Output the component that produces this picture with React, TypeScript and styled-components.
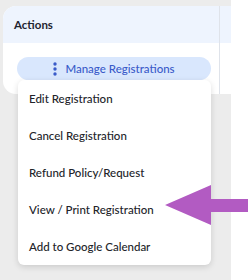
import React from 'react';
import styled, { createGlobalStyle } from 'styled-components';

const GlobalStyle = createGlobalStyle`
  html, body {
    margin: 0;
    padding: 0;
    background: #ffffff;
    font-family: Lato, "Open Sans", Arial, sans-serif;
  }
`;

const Page = styled.div`
  position: relative;
  display: flex;
  width: 248px;
  height: 280px;
  overflow: hidden;
`;

const Canvas = styled.div`
  width: 231px;
  height: 280px;
  background: #ececec;
  padding: 6px 0 0 3px;
  box-sizing: border-box;
`;

const SideStrip = styled.div`
  flex: 1;
  background: #ffffff;
`;

const Card = styled.section`
  display: flex;
  height: 88px;
  background: #ffffff;
  border-radius: 13px 0 0 13px;
  overflow: hidden;
`;

const ActionsColumn = styled.div`
  width: 223px;
  display: flex;
  flex-direction: column;
`;

const NextColumn = styled.div`
  flex: 1;
  border-left: 1px solid #dfe3ea;
  display: flex;
  flex-direction: column;
`;

const HeaderCell = styled.div`
  height: 37px;
  flex-shrink: 0;
  background: #eef4fe;
  display: flex;
  align-items: center;
  padding-left: 11px;
  font-size: 11.5px;
  font-weight: 700;
  color: #1f2430;
`;

const BodyCell = styled.div`
  padding: 14px 0 0 14px;
`;

const ManageButton = styled.button`
  width: 194px;
  height: 23px;
  border: none;
  border-radius: 12px;
  background: #d9e7fd;
  color: #3a5bc9;
  font-family: inherit;
  font-size: 11.5px;
  font-weight: 500;
  display: flex;
  align-items: center;
  justify-content: center;
  gap: 8px;
  padding: 0;
  cursor: pointer;
`;

const Menu = styled.ul`
  position: absolute;
  left: 18px;
  top: 80px;
  width: 193px;
  margin: 0;
  padding: 0;
  list-style: none;
  background: #ffffff;
  border-radius: 6px;
  box-shadow: 0 2px 6px rgba(0, 0, 0, 0.14);
`;

const MenuItem = styled.li`
  height: 37px;
  display: flex;
  align-items: center;
  padding-left: 11px;
  font-size: 11.5px;
  font-weight: 500;
  color: #222429;
  white-space: nowrap;
`;

const Arrow = styled.svg`
  position: absolute;
  left: 165px;
  top: 185px;
`;

const DotsIcon = () => (
  <svg width="4" height="14" viewBox="0 0 4 14">
    <circle cx="2" cy="2" r="1.7" fill="currentColor" />
    <circle cx="2" cy="7" r="1.7" fill="currentColor" />
    <circle cx="2" cy="12" r="1.7" fill="currentColor" />
  </svg>
);

const items = [
  'Edit Registration',
  'Cancel Registration',
  'Refund Policy/Request',
  'View / Print Registration',
  'Add to Google Calendar',
];

export default function App() {
  return (
    <>
      <GlobalStyle />
      <Page>
        <Canvas>
          <Card>
            <ActionsColumn>
              <HeaderCell>Actions</HeaderCell>
              <BodyCell>
                <ManageButton>
                  <DotsIcon />
                  Manage Registrations
                </ManageButton>
              </BodyCell>
            </ActionsColumn>
            <NextColumn>
              <HeaderCell />
            </NextColumn>
          </Card>
        </Canvas>
        <SideStrip />
        <Menu>
          {items.map((label) => (
            <MenuItem key={label}>{label}</MenuItem>
          ))}
        </Menu>
        <Arrow width="83" height="40" viewBox="0 0 83 40">
          <path d="M0 20 L46 0 L46 14 L83 14 L83 27 L46 27 L46 40 Z" fill="#b25bc2" />
        </Arrow>
      </Page>
    </>
  );
}
